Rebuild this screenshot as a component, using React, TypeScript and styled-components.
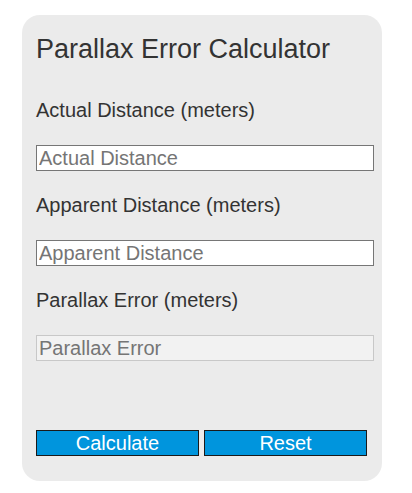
import styled, { createGlobalStyle } from 'styled-components';

const GlobalStyle = createGlobalStyle`
	body {
		margin: 0;
		background: #ffffff;
		font-family: 'Liberation Sans', Arial, sans-serif;
	}
`;

const Page = styled.div`
	padding: 15px 0 0 22px;
`;

const Card = styled.form`
	width: 360px;
	height: 466px;
	box-sizing: border-box;
	padding: 19px 8px 0 14px;
	background: #ebebeb;
	border-radius: 18px;
	display: flex;
	flex-direction: column;
`;

const Title = styled.h2`
	margin: 0 0 34px;
	font-size: 27px;
	font-weight: normal;
	line-height: 31px;
	color: #333333;
`;

const Field = styled.div`
	display: flex;
	flex-direction: column;
	gap: 24px;
	margin-bottom: 23px;
`;

const Label = styled.label`
	font-size: 20px;
	line-height: 22px;
	color: #333333;
`;

const Input = styled.input<{ $readOnly?: boolean }>`
	box-sizing: border-box;
	width: 338px;
	height: 26px;
	margin: 0;
	padding: 0 2px;
	font-family: inherit;
	font-size: 20px;
	color: #333333;
	background: ${(p) => (p.$readOnly ? '#f2f2f2' : '#ffffff')};
	border: 1px solid ${(p) => (p.$readOnly ? '#c8c8c8' : '#767676')};
	border-radius: 0;
	outline: none;

	&::placeholder {
		color: #757575;
	}
`;

const Actions = styled.div`
	display: flex;
	gap: 5px;
	margin-top: auto;
	margin-bottom: 25px;
`;

const Button = styled.button`
	box-sizing: border-box;
	width: 163px;
	height: 26px;
	padding: 0;
	font-family: inherit;
	font-size: 20px;
	line-height: 24px;
	color: #ffffff;
	background: #0095dd;
	border: 1px solid #1a1a1a;
	border-radius: 0;
	cursor: pointer;
`;

type FieldProps = {
	label: string;
	placeholder: string;
	readOnly?: boolean;
};

const FormField = ({ label, placeholder, readOnly }: FieldProps) => (
	<Field>
		<Label>{label}</Label>
		<Input type="text" placeholder={placeholder} readOnly={readOnly} $readOnly={readOnly} />
	</Field>
);

const App = () => (
	<Page>
		<GlobalStyle />
		<Card onSubmit={(e) => e.preventDefault()}>
			<Title>Parallax Error Calculator</Title>
			<FormField label="Actual Distance (meters)" placeholder="Actual Distance" />
			<FormField label="Apparent Distance (meters)" placeholder="Apparent Distance" />
			<FormField label="Parallax Error (meters)" placeholder="Parallax Error" readOnly />
			<Actions>
				<Button type="button">Calculate</Button>
				<Button type="reset">Reset</Button>
			</Actions>
		</Card>
	</Page>
);

export default App;
